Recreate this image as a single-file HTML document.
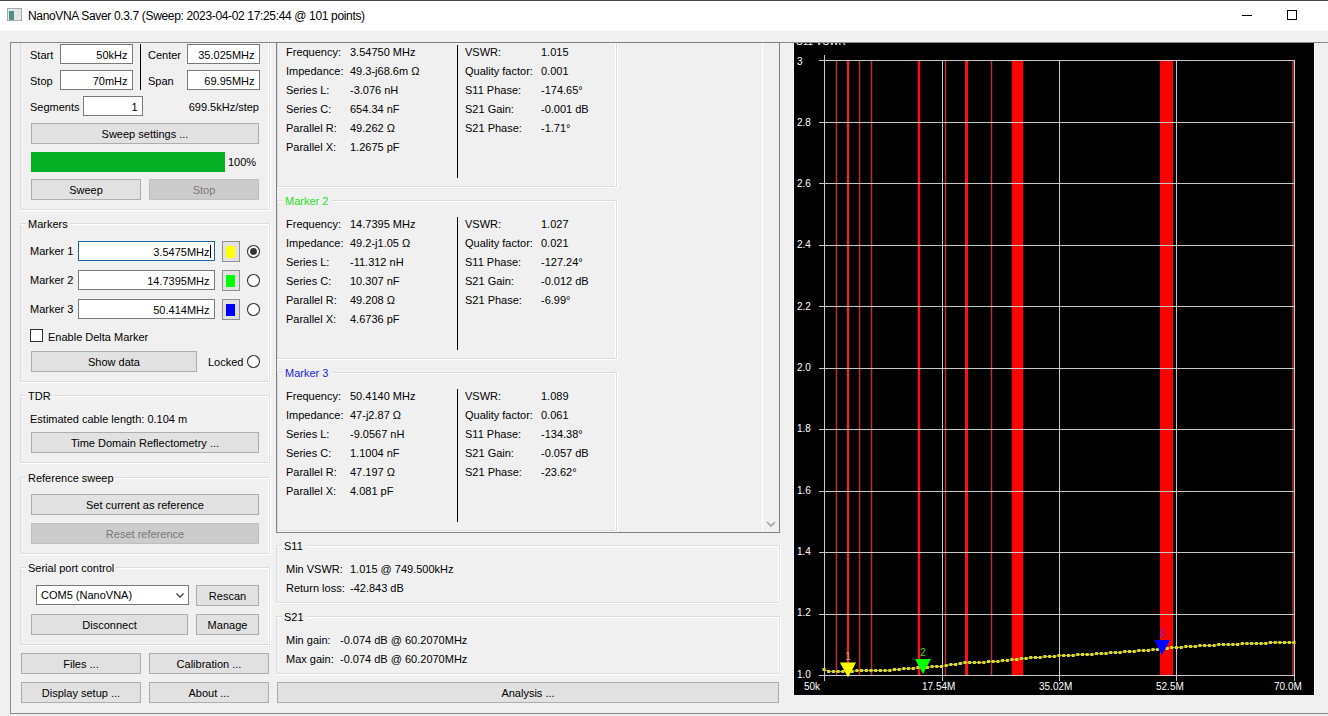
<!DOCTYPE html><html><head><meta charset="utf-8"><style>
html,body{margin:0;padding:0;}body{width:1328px;height:716px;overflow:hidden;position:relative;background:#f0f0f0;font-family:"Liberation Sans",sans-serif;color:#000;}
.a{position:absolute;}.t{white-space:nowrap;}
</style></head><body>
<div class="a" style="left:0px;top:0px;width:1328px;height:31px;background:#ffffff;"></div>
<div class="a" style="left:0px;top:0px;width:1328px;height:1px;background:#474747;"></div>
<div class="a" style="left:7px;top:8px;width:15px;height:13px;background:#e4e8e8;box-sizing:border-box;border:1px solid #a8a8a8;"></div>
<div class="a" style="left:9px;top:11px;width:5px;height:9px;background:#4f8f86;"></div>
<div class="a" style="left:15px;top:10px;width:5px;height:9px;background:#dfe6e5;"></div>
<div class="a t" style="top:9px;font-size:12px;line-height:14px;left:28px;letter-spacing:-0.345px;">NanoVNA Saver 0.3.7 (Sweep: 2023-04-02 17:25:44 @ 101 points)</div>
<div class="a" style="left:1242px;top:15px;width:10px;height:1px;background:#000;"></div>
<div class="a" style="left:1287px;top:10px;width:10px;height:10px;box-sizing:border-box;border:1px solid #000;"></div>
<div class="a" style="left:10px;top:42px;width:1323px;height:672px;box-sizing:border-box;border:1px solid #888888;"></div>
<div class="a" style="left:0;top:0;width:1328px;height:716px;clip-path:inset(43px 1052px 3px 11px)">
<div class="a" style="left:20px;top:20px;width:250px;height:190px;box-sizing:border-box;border:1px solid #dcdcdc;"></div>
<div class="a" style="left:21px;top:21px;width:248px;height:188px;box-sizing:border-box;border:1px solid #ffffff;border-width:1px 1px 0 0;"></div>
<div class="a" style="left:20px;top:210px;width:251px;height:1px;background:#ffffff;"></div>
<div class="a" style="left:270px;top:20px;width:1px;height:191px;background:#ffffff;"></div>
<div class="a t" style="top:49px;font-size:11px;line-height:13px;left:30px;">Start</div>
<div class="a" style="left:60px;top:44px;width:73px;height:20px;background:#ffffff;box-sizing:border-box;border:1px solid #7a7a7a;"></div>
<div class="a t" style="top:49px;font-size:11px;line-height:13px;left:-272.5px;width:400px;text-align:right;">50kHz</div>
<div class="a t" style="top:75px;font-size:11px;line-height:13px;left:30px;">Stop</div>
<div class="a" style="left:60px;top:70px;width:73px;height:20px;background:#ffffff;box-sizing:border-box;border:1px solid #7a7a7a;"></div>
<div class="a t" style="top:75px;font-size:11px;line-height:13px;left:-272.5px;width:400px;text-align:right;">70mHz</div>
<div class="a" style="left:140px;top:44px;width:1px;height:46px;background:#000;"></div>
<div class="a t" style="top:49px;font-size:11px;line-height:13px;left:148px;">Center</div>
<div class="a" style="left:187px;top:44px;width:73px;height:20px;background:#ffffff;box-sizing:border-box;border:1px solid #7a7a7a;"></div>
<div class="a t" style="top:49px;font-size:11px;line-height:13px;left:-145.5px;width:400px;text-align:right;">35.025MHz</div>
<div class="a t" style="top:75px;font-size:11px;line-height:13px;left:148px;">Span</div>
<div class="a" style="left:187px;top:70px;width:73px;height:20px;background:#ffffff;box-sizing:border-box;border:1px solid #7a7a7a;"></div>
<div class="a t" style="top:75px;font-size:11px;line-height:13px;left:-145.5px;width:400px;text-align:right;">69.95MHz</div>
<div class="a t" style="top:101px;font-size:11px;line-height:13px;left:30px;">Segments</div>
<div class="a" style="left:83px;top:96px;width:60px;height:20px;background:#ffffff;box-sizing:border-box;border:1px solid #7a7a7a;"></div>
<div class="a t" style="top:101px;font-size:11px;line-height:13px;left:-262.5px;width:400px;text-align:right;">1</div>
<div class="a t" style="top:101px;font-size:11px;line-height:13px;left:-141px;width:400px;text-align:right;">699.5kHz/step</div>
<div class="a" style="left:31px;top:123px;width:228px;height:21px;background:#e1e1e1;box-sizing:border-box;border:1px solid #adadad;"></div>
<div class="a t" style="top:128px;font-size:11px;line-height:13px;left:-55.0px;width:400px;text-align:center;">Sweep settings ...</div>
<div class="a" style="left:31px;top:152px;width:194px;height:20px;background:#06b025;"></div>
<div class="a t" style="top:156px;font-size:11px;line-height:13px;left:228px;">100%</div>
<div class="a" style="left:31px;top:179px;width:110px;height:21px;background:#e1e1e1;box-sizing:border-box;border:1px solid #adadad;"></div>
<div class="a t" style="top:184px;font-size:11px;line-height:13px;left:-114.0px;width:400px;text-align:center;">Sweep</div>
<div class="a" style="left:149px;top:179px;width:110px;height:21px;background:#cccccc;box-sizing:border-box;border:1px solid #bfbfbf;"></div>
<div class="a t" style="top:184px;font-size:11px;line-height:13px;color:#787878;left:4.0px;width:400px;text-align:center;">Stop</div>
<div class="a" style="left:20px;top:223px;width:250px;height:159px;box-sizing:border-box;border:1px solid #dcdcdc;"></div>
<div class="a" style="left:21px;top:224px;width:248px;height:157px;box-sizing:border-box;border:1px solid #ffffff;border-width:1px 1px 0 0;"></div>
<div class="a" style="left:20px;top:382px;width:251px;height:1px;background:#ffffff;"></div>
<div class="a" style="left:270px;top:223px;width:1px;height:160px;background:#ffffff;"></div>
<div class="a" style="left:26px;top:222px;width:44px;height:3px;background:#f0f0f0;"></div>
<div class="a t" style="top:218px;font-size:11px;line-height:13px;left:28px;">Markers</div>
<div class="a t" style="top:245px;font-size:11px;line-height:13px;left:30px;">Marker 1</div>
<div class="a" style="left:78px;top:241px;width:137px;height:20px;background:#ffffff;box-sizing:border-box;border:1px solid #1f62a8;"></div>
<div class="a t" style="top:246px;font-size:11px;line-height:13px;left:-190.5px;width:400px;text-align:right;">3.5475MHz</div>
<div class="a" style="left:222px;top:241px;width:18px;height:21px;background:#e1e1e1;box-sizing:border-box;border:1px solid #8f8f8f;"></div>
<div class="a" style="left:226px;top:246px;width:9px;height:12px;background:#ffff00;"></div>
<svg class="a" style="left:246px;top:244px" width="16" height="16"><circle cx="7.5" cy="7.5" r="6" fill="#fff" stroke="#333" stroke-width="1.1"/><circle cx="7.5" cy="7.5" r="3.4" fill="#333"/></svg>
<div class="a t" style="top:274px;font-size:11px;line-height:13px;left:30px;">Marker 2</div>
<div class="a" style="left:78px;top:270px;width:137px;height:20px;background:#ffffff;box-sizing:border-box;border:1px solid #7a7a7a;"></div>
<div class="a t" style="top:275px;font-size:11px;line-height:13px;left:-190.5px;width:400px;text-align:right;">14.7395MHz</div>
<div class="a" style="left:222px;top:270px;width:18px;height:21px;background:#e1e1e1;box-sizing:border-box;border:1px solid #8f8f8f;"></div>
<div class="a" style="left:226px;top:275px;width:9px;height:12px;background:#00ff00;"></div>
<svg class="a" style="left:246px;top:273px" width="16" height="16"><circle cx="7.5" cy="7.5" r="6" fill="#fff" stroke="#333" stroke-width="1.1"/></svg>
<div class="a t" style="top:303px;font-size:11px;line-height:13px;left:30px;">Marker 3</div>
<div class="a" style="left:78px;top:299px;width:137px;height:20px;background:#ffffff;box-sizing:border-box;border:1px solid #7a7a7a;"></div>
<div class="a t" style="top:304px;font-size:11px;line-height:13px;left:-190.5px;width:400px;text-align:right;">50.414MHz</div>
<div class="a" style="left:222px;top:299px;width:18px;height:21px;background:#e1e1e1;box-sizing:border-box;border:1px solid #8f8f8f;"></div>
<div class="a" style="left:226px;top:304px;width:9px;height:12px;background:#0000ff;"></div>
<svg class="a" style="left:246px;top:302px" width="16" height="16"><circle cx="7.5" cy="7.5" r="6" fill="#fff" stroke="#333" stroke-width="1.1"/></svg>
<div class="a" style="left:210px;top:245px;width:1px;height:13px;background:#000;"></div>
<div class="a" style="left:30px;top:329px;width:13px;height:13px;background:#fff;box-sizing:border-box;border:1px solid #333;"></div>
<div class="a t" style="top:331px;font-size:11px;line-height:13px;left:48px;">Enable Delta Marker</div>
<div class="a" style="left:31px;top:351px;width:166px;height:21px;background:#e1e1e1;box-sizing:border-box;border:1px solid #adadad;"></div>
<div class="a t" style="top:356px;font-size:11px;line-height:13px;left:-86.0px;width:400px;text-align:center;">Show data</div>
<div class="a t" style="top:356px;font-size:11px;line-height:13px;left:208px;">Locked</div>
<svg class="a" style="left:246px;top:354px" width="16" height="16"><circle cx="7.5" cy="7.5" r="6" fill="#fff" stroke="#333" stroke-width="1.1"/></svg>
<div class="a" style="left:20px;top:395px;width:250px;height:68px;box-sizing:border-box;border:1px solid #dcdcdc;"></div>
<div class="a" style="left:21px;top:396px;width:248px;height:66px;box-sizing:border-box;border:1px solid #ffffff;border-width:1px 1px 0 0;"></div>
<div class="a" style="left:20px;top:463px;width:251px;height:1px;background:#ffffff;"></div>
<div class="a" style="left:270px;top:395px;width:1px;height:69px;background:#ffffff;"></div>
<div class="a" style="left:26px;top:394px;width:25px;height:3px;background:#f0f0f0;"></div>
<div class="a t" style="top:390px;font-size:11px;line-height:13px;left:28px;">TDR</div>
<div class="a t" style="top:413px;font-size:11px;line-height:13px;left:30px;">Estimated cable length:  0.104 m</div>
<div class="a" style="left:31px;top:432px;width:228px;height:21px;background:#e1e1e1;box-sizing:border-box;border:1px solid #adadad;"></div>
<div class="a t" style="top:437px;font-size:11px;line-height:13px;left:-55.0px;width:400px;text-align:center;">Time Domain Reflectometry ...</div>
<div class="a" style="left:20px;top:477px;width:250px;height:77px;box-sizing:border-box;border:1px solid #dcdcdc;"></div>
<div class="a" style="left:21px;top:478px;width:248px;height:75px;box-sizing:border-box;border:1px solid #ffffff;border-width:1px 1px 0 0;"></div>
<div class="a" style="left:20px;top:554px;width:251px;height:1px;background:#ffffff;"></div>
<div class="a" style="left:270px;top:477px;width:1px;height:78px;background:#ffffff;"></div>
<div class="a" style="left:26px;top:476px;width:88px;height:3px;background:#f0f0f0;"></div>
<div class="a t" style="top:472px;font-size:11px;line-height:13px;left:28px;">Reference sweep</div>
<div class="a" style="left:31px;top:494px;width:228px;height:21px;background:#e1e1e1;box-sizing:border-box;border:1px solid #adadad;"></div>
<div class="a t" style="top:499px;font-size:11px;line-height:13px;left:-55.0px;width:400px;text-align:center;">Set current as reference</div>
<div class="a" style="left:31px;top:523px;width:228px;height:21px;background:#cccccc;box-sizing:border-box;border:1px solid #bfbfbf;"></div>
<div class="a t" style="top:528px;font-size:11px;line-height:13px;color:#787878;left:-55.0px;width:400px;text-align:center;">Reset reference</div>
<div class="a" style="left:20px;top:567px;width:250px;height:78px;box-sizing:border-box;border:1px solid #dcdcdc;"></div>
<div class="a" style="left:21px;top:568px;width:248px;height:76px;box-sizing:border-box;border:1px solid #ffffff;border-width:1px 1px 0 0;"></div>
<div class="a" style="left:20px;top:645px;width:251px;height:1px;background:#ffffff;"></div>
<div class="a" style="left:270px;top:567px;width:1px;height:79px;background:#ffffff;"></div>
<div class="a" style="left:26px;top:566px;width:90px;height:3px;background:#f0f0f0;"></div>
<div class="a t" style="top:562px;font-size:11px;line-height:13px;left:28px;">Serial port control</div>
<div class="a" style="left:36px;top:585px;width:153px;height:20px;background:#fff;box-sizing:border-box;border:1px solid #7a7a7a;"></div>
<div class="a t" style="top:589px;font-size:11px;line-height:13px;left:41px;">COM5 (NanoVNA)</div>
<svg class="a" style="left:175px;top:592px" width="10" height="6"><polyline points="1.5,1.5 5,5.2 8.5,1.5" fill="none" stroke="#404040" stroke-width="1.3"/></svg>
<div class="a" style="left:196px;top:585px;width:63px;height:21px;background:#e1e1e1;box-sizing:border-box;border:1px solid #adadad;"></div>
<div class="a t" style="top:590px;font-size:11px;line-height:13px;left:27.5px;width:400px;text-align:center;">Rescan</div>
<div class="a" style="left:31px;top:614px;width:157px;height:21px;background:#e1e1e1;box-sizing:border-box;border:1px solid #adadad;"></div>
<div class="a t" style="top:619px;font-size:11px;line-height:13px;left:-90.5px;width:400px;text-align:center;">Disconnect</div>
<div class="a" style="left:196px;top:614px;width:63px;height:21px;background:#e1e1e1;box-sizing:border-box;border:1px solid #adadad;"></div>
<div class="a t" style="top:619px;font-size:11px;line-height:13px;left:27.5px;width:400px;text-align:center;">Manage</div>
<div class="a" style="left:21px;top:653px;width:120px;height:21px;background:#e1e1e1;box-sizing:border-box;border:1px solid #adadad;"></div>
<div class="a t" style="top:658px;font-size:11px;line-height:13px;left:-119.0px;width:400px;text-align:center;">Files ...</div>
<div class="a" style="left:149px;top:653px;width:120px;height:21px;background:#e1e1e1;box-sizing:border-box;border:1px solid #adadad;"></div>
<div class="a t" style="top:658px;font-size:11px;line-height:13px;left:9.0px;width:400px;text-align:center;">Calibration ...</div>
<div class="a" style="left:21px;top:682px;width:120px;height:21px;background:#e1e1e1;box-sizing:border-box;border:1px solid #adadad;"></div>
<div class="a t" style="top:687px;font-size:11px;line-height:13px;left:-119.0px;width:400px;text-align:center;">Display setup ...</div>
<div class="a" style="left:149px;top:682px;width:120px;height:21px;background:#e1e1e1;box-sizing:border-box;border:1px solid #adadad;"></div>
<div class="a t" style="top:687px;font-size:11px;line-height:13px;left:9.0px;width:400px;text-align:center;">About ...</div>
</div>
<div class="a" style="left:276px;top:42px;width:504px;height:491px;box-sizing:border-box;border:1px solid #828282;"></div>
<div class="a" style="left:277px;top:43px;width:502px;height:489px;overflow:hidden">
<div class="a" style="left:0px;top:-15px;width:340px;height:159px;box-sizing:border-box;border:1px solid #dcdcdc;"></div>
<div class="a" style="left:1px;top:-14px;width:338px;height:157px;box-sizing:border-box;border:1px solid #ffffff;border-width:1px 1px 0 0;"></div>
<div class="a" style="left:0px;top:144px;width:341px;height:1px;background:#ffffff;"></div>
<div class="a" style="left:340px;top:-15px;width:1px;height:160px;background:#ffffff;"></div>
<div class="a" style="left:6px;top:-16px;width:48px;height:3px;background:#f0f0f0;"></div>
<div class="a t" style="top:-20px;font-size:11px;line-height:13px;color:#ffff00;left:8px;">Marker 1</div>
<div class="a t" style="top:3px;font-size:11px;line-height:13px;left:9px;">Frequency:</div>
<div class="a t" style="top:3px;font-size:11px;line-height:13px;left:73px;">3.54750 MHz</div>
<div class="a t" style="top:22px;font-size:11px;line-height:13px;left:9px;">Impedance:</div>
<div class="a t" style="top:22px;font-size:11px;line-height:13px;left:73px;">49.3-j68.6m Ω</div>
<div class="a t" style="top:41px;font-size:11px;line-height:13px;left:9px;">Series L:</div>
<div class="a t" style="top:41px;font-size:11px;line-height:13px;left:73px;">-3.076 nH</div>
<div class="a t" style="top:60px;font-size:11px;line-height:13px;left:9px;">Series C:</div>
<div class="a t" style="top:60px;font-size:11px;line-height:13px;left:73px;">654.34 nF</div>
<div class="a t" style="top:79px;font-size:11px;line-height:13px;left:9px;">Parallel R:</div>
<div class="a t" style="top:79px;font-size:11px;line-height:13px;left:73px;">49.262 Ω</div>
<div class="a t" style="top:98px;font-size:11px;line-height:13px;left:9px;">Parallel X:</div>
<div class="a t" style="top:98px;font-size:11px;line-height:13px;left:73px;">1.2675 pF</div>
<div class="a t" style="top:3px;font-size:11px;line-height:13px;left:188px;">VSWR:</div>
<div class="a t" style="top:3px;font-size:11px;line-height:13px;left:264px;">1.015</div>
<div class="a t" style="top:22px;font-size:11px;line-height:13px;left:188px;">Quality factor:</div>
<div class="a t" style="top:22px;font-size:11px;line-height:13px;left:264px;">0.001</div>
<div class="a t" style="top:41px;font-size:11px;line-height:13px;left:188px;">S11 Phase:</div>
<div class="a t" style="top:41px;font-size:11px;line-height:13px;left:264px;">-174.65°</div>
<div class="a t" style="top:60px;font-size:11px;line-height:13px;left:188px;">S21 Gain:</div>
<div class="a t" style="top:60px;font-size:11px;line-height:13px;left:264px;">-0.001 dB</div>
<div class="a t" style="top:79px;font-size:11px;line-height:13px;left:188px;">S21 Phase:</div>
<div class="a t" style="top:79px;font-size:11px;line-height:13px;left:264px;">-1.71°</div>
<div class="a" style="left:180px;top:2px;width:1px;height:133px;background:#000;"></div>
<div class="a" style="left:0px;top:157px;width:340px;height:159px;box-sizing:border-box;border:1px solid #dcdcdc;"></div>
<div class="a" style="left:1px;top:158px;width:338px;height:157px;box-sizing:border-box;border:1px solid #ffffff;border-width:1px 1px 0 0;"></div>
<div class="a" style="left:0px;top:316px;width:341px;height:1px;background:#ffffff;"></div>
<div class="a" style="left:340px;top:157px;width:1px;height:160px;background:#ffffff;"></div>
<div class="a" style="left:6px;top:156px;width:48px;height:3px;background:#f0f0f0;"></div>
<div class="a t" style="top:152px;font-size:11px;line-height:13px;color:#1ee01e;left:8px;">Marker 2</div>
<div class="a t" style="top:175px;font-size:11px;line-height:13px;left:9px;">Frequency:</div>
<div class="a t" style="top:175px;font-size:11px;line-height:13px;left:73px;">14.7395 MHz</div>
<div class="a t" style="top:194px;font-size:11px;line-height:13px;left:9px;">Impedance:</div>
<div class="a t" style="top:194px;font-size:11px;line-height:13px;left:73px;">49.2-j1.05 Ω</div>
<div class="a t" style="top:213px;font-size:11px;line-height:13px;left:9px;">Series L:</div>
<div class="a t" style="top:213px;font-size:11px;line-height:13px;left:73px;">-11.312 nH</div>
<div class="a t" style="top:232px;font-size:11px;line-height:13px;left:9px;">Series C:</div>
<div class="a t" style="top:232px;font-size:11px;line-height:13px;left:73px;">10.307 nF</div>
<div class="a t" style="top:251px;font-size:11px;line-height:13px;left:9px;">Parallel R:</div>
<div class="a t" style="top:251px;font-size:11px;line-height:13px;left:73px;">49.208 Ω</div>
<div class="a t" style="top:270px;font-size:11px;line-height:13px;left:9px;">Parallel X:</div>
<div class="a t" style="top:270px;font-size:11px;line-height:13px;left:73px;">4.6736 pF</div>
<div class="a t" style="top:175px;font-size:11px;line-height:13px;left:188px;">VSWR:</div>
<div class="a t" style="top:175px;font-size:11px;line-height:13px;left:264px;">1.027</div>
<div class="a t" style="top:194px;font-size:11px;line-height:13px;left:188px;">Quality factor:</div>
<div class="a t" style="top:194px;font-size:11px;line-height:13px;left:264px;">0.021</div>
<div class="a t" style="top:213px;font-size:11px;line-height:13px;left:188px;">S11 Phase:</div>
<div class="a t" style="top:213px;font-size:11px;line-height:13px;left:264px;">-127.24°</div>
<div class="a t" style="top:232px;font-size:11px;line-height:13px;left:188px;">S21 Gain:</div>
<div class="a t" style="top:232px;font-size:11px;line-height:13px;left:264px;">-0.012 dB</div>
<div class="a t" style="top:251px;font-size:11px;line-height:13px;left:188px;">S21 Phase:</div>
<div class="a t" style="top:251px;font-size:11px;line-height:13px;left:264px;">-6.99°</div>
<div class="a" style="left:180px;top:174px;width:1px;height:133px;background:#000;"></div>
<div class="a" style="left:0px;top:329px;width:340px;height:159px;box-sizing:border-box;border:1px solid #dcdcdc;"></div>
<div class="a" style="left:1px;top:330px;width:338px;height:157px;box-sizing:border-box;border:1px solid #ffffff;border-width:1px 1px 0 0;"></div>
<div class="a" style="left:0px;top:488px;width:341px;height:1px;background:#ffffff;"></div>
<div class="a" style="left:340px;top:329px;width:1px;height:160px;background:#ffffff;"></div>
<div class="a" style="left:6px;top:328px;width:48px;height:3px;background:#f0f0f0;"></div>
<div class="a t" style="top:324px;font-size:11px;line-height:13px;color:#2222dd;left:8px;">Marker 3</div>
<div class="a t" style="top:347px;font-size:11px;line-height:13px;left:9px;">Frequency:</div>
<div class="a t" style="top:347px;font-size:11px;line-height:13px;left:73px;">50.4140 MHz</div>
<div class="a t" style="top:366px;font-size:11px;line-height:13px;left:9px;">Impedance:</div>
<div class="a t" style="top:366px;font-size:11px;line-height:13px;left:73px;">47-j2.87 Ω</div>
<div class="a t" style="top:385px;font-size:11px;line-height:13px;left:9px;">Series L:</div>
<div class="a t" style="top:385px;font-size:11px;line-height:13px;left:73px;">-9.0567 nH</div>
<div class="a t" style="top:404px;font-size:11px;line-height:13px;left:9px;">Series C:</div>
<div class="a t" style="top:404px;font-size:11px;line-height:13px;left:73px;">1.1004 nF</div>
<div class="a t" style="top:423px;font-size:11px;line-height:13px;left:9px;">Parallel R:</div>
<div class="a t" style="top:423px;font-size:11px;line-height:13px;left:73px;">47.197 Ω</div>
<div class="a t" style="top:442px;font-size:11px;line-height:13px;left:9px;">Parallel X:</div>
<div class="a t" style="top:442px;font-size:11px;line-height:13px;left:73px;">4.081 pF</div>
<div class="a t" style="top:347px;font-size:11px;line-height:13px;left:188px;">VSWR:</div>
<div class="a t" style="top:347px;font-size:11px;line-height:13px;left:264px;">1.089</div>
<div class="a t" style="top:366px;font-size:11px;line-height:13px;left:188px;">Quality factor:</div>
<div class="a t" style="top:366px;font-size:11px;line-height:13px;left:264px;">0.061</div>
<div class="a t" style="top:385px;font-size:11px;line-height:13px;left:188px;">S11 Phase:</div>
<div class="a t" style="top:385px;font-size:11px;line-height:13px;left:264px;">-134.38°</div>
<div class="a t" style="top:404px;font-size:11px;line-height:13px;left:188px;">S21 Gain:</div>
<div class="a t" style="top:404px;font-size:11px;line-height:13px;left:264px;">-0.057 dB</div>
<div class="a t" style="top:423px;font-size:11px;line-height:13px;left:188px;">S21 Phase:</div>
<div class="a t" style="top:423px;font-size:11px;line-height:13px;left:264px;">-23.62°</div>
<div class="a" style="left:180px;top:346px;width:1px;height:133px;background:#000;"></div>
<div class="a" style="left:485px;top:0px;width:1px;height:489px;background:#ffffff;"></div>
<svg class="a" style="left:489px;top:478px" width="10" height="6"><polyline points="1,1 5,5 9,1" fill="none" stroke="#a0a0a0" stroke-width="1.5"/></svg>
</div>
<div class="a" style="left:276px;top:545px;width:504px;height:58px;box-sizing:border-box;border:1px solid #dcdcdc;"></div>
<div class="a" style="left:277px;top:546px;width:502px;height:56px;box-sizing:border-box;border:1px solid #ffffff;border-width:1px 1px 0 0;"></div>
<div class="a" style="left:276px;top:603px;width:505px;height:1px;background:#ffffff;"></div>
<div class="a" style="left:780px;top:545px;width:1px;height:59px;background:#ffffff;"></div>
<div class="a" style="left:282px;top:544px;width:24px;height:3px;background:#f0f0f0;"></div>
<div class="a t" style="top:540px;font-size:11px;line-height:13px;left:284px;">S11</div>
<div class="a t" style="top:563px;font-size:11px;line-height:13px;left:286px;">Min VSWR:</div>
<div class="a t" style="top:563px;font-size:11px;line-height:13px;left:350px;">1.015 @ 749.500kHz</div>
<div class="a t" style="top:582px;font-size:11px;line-height:13px;left:286px;">Return loss:</div>
<div class="a t" style="top:582px;font-size:11px;line-height:13px;left:350px;">-42.843 dB</div>
<div class="a" style="left:276px;top:616px;width:504px;height:58px;box-sizing:border-box;border:1px solid #dcdcdc;"></div>
<div class="a" style="left:277px;top:617px;width:502px;height:56px;box-sizing:border-box;border:1px solid #ffffff;border-width:1px 1px 0 0;"></div>
<div class="a" style="left:276px;top:674px;width:505px;height:1px;background:#ffffff;"></div>
<div class="a" style="left:780px;top:616px;width:1px;height:59px;background:#ffffff;"></div>
<div class="a" style="left:282px;top:615px;width:24px;height:3px;background:#f0f0f0;"></div>
<div class="a t" style="top:611px;font-size:11px;line-height:13px;left:284px;">S21</div>
<div class="a t" style="top:634px;font-size:11px;line-height:13px;left:286px;">Min gain:</div>
<div class="a t" style="top:634px;font-size:11px;line-height:13px;left:340px;">-0.074 dB @ 60.2070MHz</div>
<div class="a t" style="top:653px;font-size:11px;line-height:13px;left:286px;">Max gain:</div>
<div class="a t" style="top:653px;font-size:11px;line-height:13px;left:340px;">-0.074 dB @ 60.2070MHz</div>
<div class="a" style="left:277px;top:682px;width:502px;height:21px;background:#e1e1e1;box-sizing:border-box;border:1px solid #adadad;"></div>
<div class="a t" style="top:687px;font-size:11px;line-height:13px;left:328.0px;width:400px;text-align:center;">Analysis ...</div>
<div class="a" style="left:1314px;top:43px;width:1px;height:652px;background:#ffffff;"></div>
<div class="a" style="left:793px;top:43px;width:1px;height:652px;background:#ffffff;"></div>
<div class="a" style="left:794px;top:43px;width:520px;height:652px;background:#000000;"></div>
<svg class="a" style="left:794px;top:43px" width="520" height="652" viewBox="794 43 520 652">
<text x="796" y="45" font-size="10" fill="#fff" font-family="Liberation Sans">S11 VSWR</text>
<rect x="835.75" y="60" width="1.5" height="615" fill="#b83030"/>
<rect x="846.75" y="60" width="2.5" height="615" fill="#d03030"/>
<rect x="858.75" y="60" width="1.5" height="615" fill="#b83030"/>
<rect x="870.75" y="60" width="1.5" height="615" fill="#b83030"/>
<rect x="917.75" y="60" width="2.5" height="615" fill="#ff1010"/>
<rect x="944.75" y="60" width="1.5" height="615" fill="#b83030"/>
<rect x="965.0" y="60" width="3" height="615" fill="#ff1010"/>
<rect x="990.75" y="60" width="1.5" height="615" fill="#b83030"/>
<rect x="1011.75" y="60" width="11.5" height="615" fill="#ff0000"/>
<rect x="1160.0" y="60" width="13" height="615" fill="#ff0000"/>
<rect x="1292.25" y="60" width="1.5" height="615" fill="#c03030"/>
<rect x="819" y="60" width="476" height="1" fill="#c8c8c8"/>
<text x="797" y="65" font-size="10" fill="#fff" font-family="Liberation Sans">3</text>
<rect x="819" y="122" width="476" height="1" fill="#c8c8c8"/>
<text x="797" y="126" font-size="10" fill="#fff" font-family="Liberation Sans">2.8</text>
<rect x="819" y="183" width="476" height="1" fill="#c8c8c8"/>
<text x="797" y="187" font-size="10" fill="#fff" font-family="Liberation Sans">2.6</text>
<rect x="819" y="245" width="476" height="1" fill="#c8c8c8"/>
<text x="797" y="248" font-size="10" fill="#fff" font-family="Liberation Sans">2.4</text>
<rect x="819" y="306" width="476" height="1" fill="#c8c8c8"/>
<text x="797" y="310" font-size="10" fill="#fff" font-family="Liberation Sans">2.2</text>
<rect x="819" y="368" width="476" height="1" fill="#c8c8c8"/>
<text x="797" y="371" font-size="10" fill="#fff" font-family="Liberation Sans">2.0</text>
<rect x="819" y="429" width="476" height="1" fill="#c8c8c8"/>
<text x="797" y="432" font-size="10" fill="#fff" font-family="Liberation Sans">1.8</text>
<rect x="819" y="491" width="476" height="1" fill="#c8c8c8"/>
<text x="797" y="494" font-size="10" fill="#fff" font-family="Liberation Sans">1.6</text>
<rect x="819" y="552" width="476" height="1" fill="#c8c8c8"/>
<text x="797" y="555" font-size="10" fill="#fff" font-family="Liberation Sans">1.4</text>
<rect x="819" y="614" width="476" height="1" fill="#c8c8c8"/>
<text x="797" y="616" font-size="10" fill="#fff" font-family="Liberation Sans">1.2</text>
<rect x="819" y="675" width="476" height="1" fill="#c8c8c8"/>
<text x="797" y="678" font-size="10" fill="#fff" font-family="Liberation Sans">1.0</text>
<rect x="824" y="55" width="1" height="626" fill="#c8c8c8"/>
<rect x="942" y="60" width="1" height="621" fill="#c8c8c8"/>
<rect x="1059" y="60" width="1" height="621" fill="#c8c8c8"/>
<rect x="1176" y="60" width="1" height="621" fill="#c8c8c8"/>
<rect x="1294" y="60" width="1" height="621" fill="#c8c8c8"/>
<text x="804" y="690" font-size="10" fill="#fff" font-family="Liberation Sans">50k</text>
<text x="922" y="690" font-size="10" fill="#fff" font-family="Liberation Sans">17.54M</text>
<text x="1039" y="690" font-size="10" fill="#fff" font-family="Liberation Sans">35.02M</text>
<text x="1156" y="690" font-size="10" fill="#fff" font-family="Liberation Sans">52.5M</text>
<text x="1274" y="690" font-size="10" fill="#fff" font-family="Liberation Sans">70.0M</text>
<polyline points="824.0,669.5 828.7,671.5 833.4,671.5 838.1,671.5 842.8,671.5 847.5,671.5 852.2,671.5 856.9,670.5 861.6,670.5 866.3,670.5 871.0,670.5 875.7,670.5 880.4,670.5 885.1,670.5 889.8,670.5 894.5,669.5 899.2,669.5 903.9,668.5 908.6,668.5 913.3,668.5 918.0,667.5 922.7,667.5 927.4,667.5 932.1,666.5 936.8,666.5 941.5,666.5 946.2,665.5 950.9,664.5 955.6,664.5 960.3,663.5 965.0,662.5 969.7,662.5 974.4,662.5 979.1,662.5 983.8,662.5 988.5,661.5 993.2,661.5 997.9,661.5 1002.6,660.5 1007.3,660.5 1012.0,659.5 1016.7,659.5 1021.4,658.5 1026.1,658.5 1030.8,657.5 1035.5,657.5 1040.2,657.5 1044.9,656.5 1049.6,656.5 1054.3,656.5 1059.0,655.5 1063.7,655.5 1068.4,655.5 1073.1,655.5 1077.8,654.5 1082.5,654.5 1087.2,654.5 1091.9,654.5 1096.6,653.5 1101.3,653.5 1106.0,653.5 1110.7,652.5 1115.4,652.5 1120.1,652.5 1124.8,651.5 1129.5,651.5 1134.2,651.5 1138.9,650.5 1143.6,650.5 1148.3,650.5 1153.0,649.5 1157.7,649.5 1162.4,648.5 1167.1,648.5 1171.8,647.5 1176.5,647.5 1181.2,647.5 1185.9,646.5 1190.6,646.5 1195.3,646.5 1200.0,645.5 1204.7,645.5 1209.4,645.5 1214.1,645.5 1218.8,644.5 1223.5,644.5 1228.2,644.5 1232.9,644.5 1237.6,644.5 1242.3,643.5 1247.0,643.5 1251.7,643.5 1256.4,643.5 1261.1,643.5 1265.8,643.5 1270.5,642.5 1275.2,642.5 1279.9,642.5 1284.6,642.5 1289.3,642.5 1294.0,642.5" fill="none" stroke="#b8b800" stroke-width="1"/>
<rect x="822.5" y="668.0" width="3" height="3" fill="#d8d830"/>
<rect x="827.2" y="670.0" width="3" height="3" fill="#d8d830"/>
<rect x="831.9" y="670.0" width="3" height="3" fill="#d8d830"/>
<rect x="836.6" y="670.0" width="3" height="3" fill="#d8d830"/>
<rect x="841.3" y="670.0" width="3" height="3" fill="#d8d830"/>
<rect x="846.0" y="670.0" width="3" height="3" fill="#d8d830"/>
<rect x="850.7" y="670.0" width="3" height="3" fill="#d8d830"/>
<rect x="855.4" y="669.0" width="3" height="3" fill="#d8d830"/>
<rect x="860.1" y="669.0" width="3" height="3" fill="#d8d830"/>
<rect x="864.8" y="669.0" width="3" height="3" fill="#d8d830"/>
<rect x="869.5" y="669.0" width="3" height="3" fill="#d8d830"/>
<rect x="874.2" y="669.0" width="3" height="3" fill="#d8d830"/>
<rect x="878.9" y="669.0" width="3" height="3" fill="#d8d830"/>
<rect x="883.6" y="669.0" width="3" height="3" fill="#d8d830"/>
<rect x="888.3" y="669.0" width="3" height="3" fill="#d8d830"/>
<rect x="893.0" y="668.0" width="3" height="3" fill="#d8d830"/>
<rect x="897.7" y="668.0" width="3" height="3" fill="#d8d830"/>
<rect x="902.4" y="667.0" width="3" height="3" fill="#d8d830"/>
<rect x="907.1" y="667.0" width="3" height="3" fill="#d8d830"/>
<rect x="911.8" y="667.0" width="3" height="3" fill="#d8d830"/>
<rect x="916.5" y="666.0" width="3" height="3" fill="#d8d830"/>
<rect x="921.2" y="666.0" width="3" height="3" fill="#d8d830"/>
<rect x="925.9" y="666.0" width="3" height="3" fill="#d8d830"/>
<rect x="930.6" y="665.0" width="3" height="3" fill="#d8d830"/>
<rect x="935.3" y="665.0" width="3" height="3" fill="#d8d830"/>
<rect x="940.0" y="665.0" width="3" height="3" fill="#d8d830"/>
<rect x="944.7" y="664.0" width="3" height="3" fill="#d8d830"/>
<rect x="949.4" y="663.0" width="3" height="3" fill="#d8d830"/>
<rect x="954.1" y="663.0" width="3" height="3" fill="#d8d830"/>
<rect x="958.8" y="662.0" width="3" height="3" fill="#d8d830"/>
<rect x="963.5" y="661.0" width="3" height="3" fill="#d8d830"/>
<rect x="968.2" y="661.0" width="3" height="3" fill="#d8d830"/>
<rect x="972.9" y="661.0" width="3" height="3" fill="#d8d830"/>
<rect x="977.6" y="661.0" width="3" height="3" fill="#d8d830"/>
<rect x="982.3" y="661.0" width="3" height="3" fill="#d8d830"/>
<rect x="987.0" y="660.0" width="3" height="3" fill="#d8d830"/>
<rect x="991.7" y="660.0" width="3" height="3" fill="#d8d830"/>
<rect x="996.4" y="660.0" width="3" height="3" fill="#d8d830"/>
<rect x="1001.1" y="659.0" width="3" height="3" fill="#d8d830"/>
<rect x="1005.8" y="659.0" width="3" height="3" fill="#d8d830"/>
<rect x="1010.5" y="658.0" width="3" height="3" fill="#d8d830"/>
<rect x="1015.2" y="658.0" width="3" height="3" fill="#d8d830"/>
<rect x="1019.9" y="657.0" width="3" height="3" fill="#d8d830"/>
<rect x="1024.6" y="657.0" width="3" height="3" fill="#d8d830"/>
<rect x="1029.3" y="656.0" width="3" height="3" fill="#d8d830"/>
<rect x="1034.0" y="656.0" width="3" height="3" fill="#d8d830"/>
<rect x="1038.7" y="656.0" width="3" height="3" fill="#d8d830"/>
<rect x="1043.4" y="655.0" width="3" height="3" fill="#d8d830"/>
<rect x="1048.1" y="655.0" width="3" height="3" fill="#d8d830"/>
<rect x="1052.8" y="655.0" width="3" height="3" fill="#d8d830"/>
<rect x="1057.5" y="654.0" width="3" height="3" fill="#d8d830"/>
<rect x="1062.2" y="654.0" width="3" height="3" fill="#d8d830"/>
<rect x="1066.9" y="654.0" width="3" height="3" fill="#d8d830"/>
<rect x="1071.6" y="654.0" width="3" height="3" fill="#d8d830"/>
<rect x="1076.3" y="653.0" width="3" height="3" fill="#d8d830"/>
<rect x="1081.0" y="653.0" width="3" height="3" fill="#d8d830"/>
<rect x="1085.7" y="653.0" width="3" height="3" fill="#d8d830"/>
<rect x="1090.4" y="653.0" width="3" height="3" fill="#d8d830"/>
<rect x="1095.1" y="652.0" width="3" height="3" fill="#d8d830"/>
<rect x="1099.8" y="652.0" width="3" height="3" fill="#d8d830"/>
<rect x="1104.5" y="652.0" width="3" height="3" fill="#d8d830"/>
<rect x="1109.2" y="651.0" width="3" height="3" fill="#d8d830"/>
<rect x="1113.9" y="651.0" width="3" height="3" fill="#d8d830"/>
<rect x="1118.6" y="651.0" width="3" height="3" fill="#d8d830"/>
<rect x="1123.3" y="650.0" width="3" height="3" fill="#d8d830"/>
<rect x="1128.0" y="650.0" width="3" height="3" fill="#d8d830"/>
<rect x="1132.7" y="650.0" width="3" height="3" fill="#d8d830"/>
<rect x="1137.4" y="649.0" width="3" height="3" fill="#d8d830"/>
<rect x="1142.1" y="649.0" width="3" height="3" fill="#d8d830"/>
<rect x="1146.8" y="649.0" width="3" height="3" fill="#d8d830"/>
<rect x="1151.5" y="648.0" width="3" height="3" fill="#d8d830"/>
<rect x="1156.2" y="648.0" width="3" height="3" fill="#d8d830"/>
<rect x="1160.9" y="647.0" width="3" height="3" fill="#d8d830"/>
<rect x="1165.6" y="647.0" width="3" height="3" fill="#d8d830"/>
<rect x="1170.3" y="646.0" width="3" height="3" fill="#d8d830"/>
<rect x="1175.0" y="646.0" width="3" height="3" fill="#d8d830"/>
<rect x="1179.7" y="646.0" width="3" height="3" fill="#d8d830"/>
<rect x="1184.4" y="645.0" width="3" height="3" fill="#d8d830"/>
<rect x="1189.1" y="645.0" width="3" height="3" fill="#d8d830"/>
<rect x="1193.8" y="645.0" width="3" height="3" fill="#d8d830"/>
<rect x="1198.5" y="644.0" width="3" height="3" fill="#d8d830"/>
<rect x="1203.2" y="644.0" width="3" height="3" fill="#d8d830"/>
<rect x="1207.9" y="644.0" width="3" height="3" fill="#d8d830"/>
<rect x="1212.6" y="644.0" width="3" height="3" fill="#d8d830"/>
<rect x="1217.3" y="643.0" width="3" height="3" fill="#d8d830"/>
<rect x="1222.0" y="643.0" width="3" height="3" fill="#d8d830"/>
<rect x="1226.7" y="643.0" width="3" height="3" fill="#d8d830"/>
<rect x="1231.4" y="643.0" width="3" height="3" fill="#d8d830"/>
<rect x="1236.1" y="643.0" width="3" height="3" fill="#d8d830"/>
<rect x="1240.8" y="642.0" width="3" height="3" fill="#d8d830"/>
<rect x="1245.5" y="642.0" width="3" height="3" fill="#d8d830"/>
<rect x="1250.2" y="642.0" width="3" height="3" fill="#d8d830"/>
<rect x="1254.9" y="642.0" width="3" height="3" fill="#d8d830"/>
<rect x="1259.6" y="642.0" width="3" height="3" fill="#d8d830"/>
<rect x="1264.3" y="642.0" width="3" height="3" fill="#d8d830"/>
<rect x="1269.0" y="641.0" width="3" height="3" fill="#d8d830"/>
<rect x="1273.7" y="641.0" width="3" height="3" fill="#d8d830"/>
<rect x="1278.4" y="641.0" width="3" height="3" fill="#d8d830"/>
<rect x="1283.1" y="641.0" width="3" height="3" fill="#d8d830"/>
<rect x="1287.8" y="641.0" width="3" height="3" fill="#d8d830"/>
<rect x="1292.5" y="641.0" width="3" height="3" fill="#d8d830"/>
<polygon points="840,662.5 856,662.5 848,677.5" fill="#ffff00"/>
<text x="848" y="659.5" font-size="10" fill="#e0a040" text-anchor="middle" font-family="Liberation Sans">1</text>
<polygon points="915,659 931,659 923,674" fill="#00ff00"/>
<text x="923" y="656" font-size="10" fill="#30e030" text-anchor="middle" font-family="Liberation Sans">2</text>
<polygon points="1154,640 1170,640 1162,655" fill="#0000ff"/>
<text x="1162" y="637" font-size="10" fill="#8020c0" text-anchor="middle" font-family="Liberation Sans">3</text>
</svg>
</body></html>
